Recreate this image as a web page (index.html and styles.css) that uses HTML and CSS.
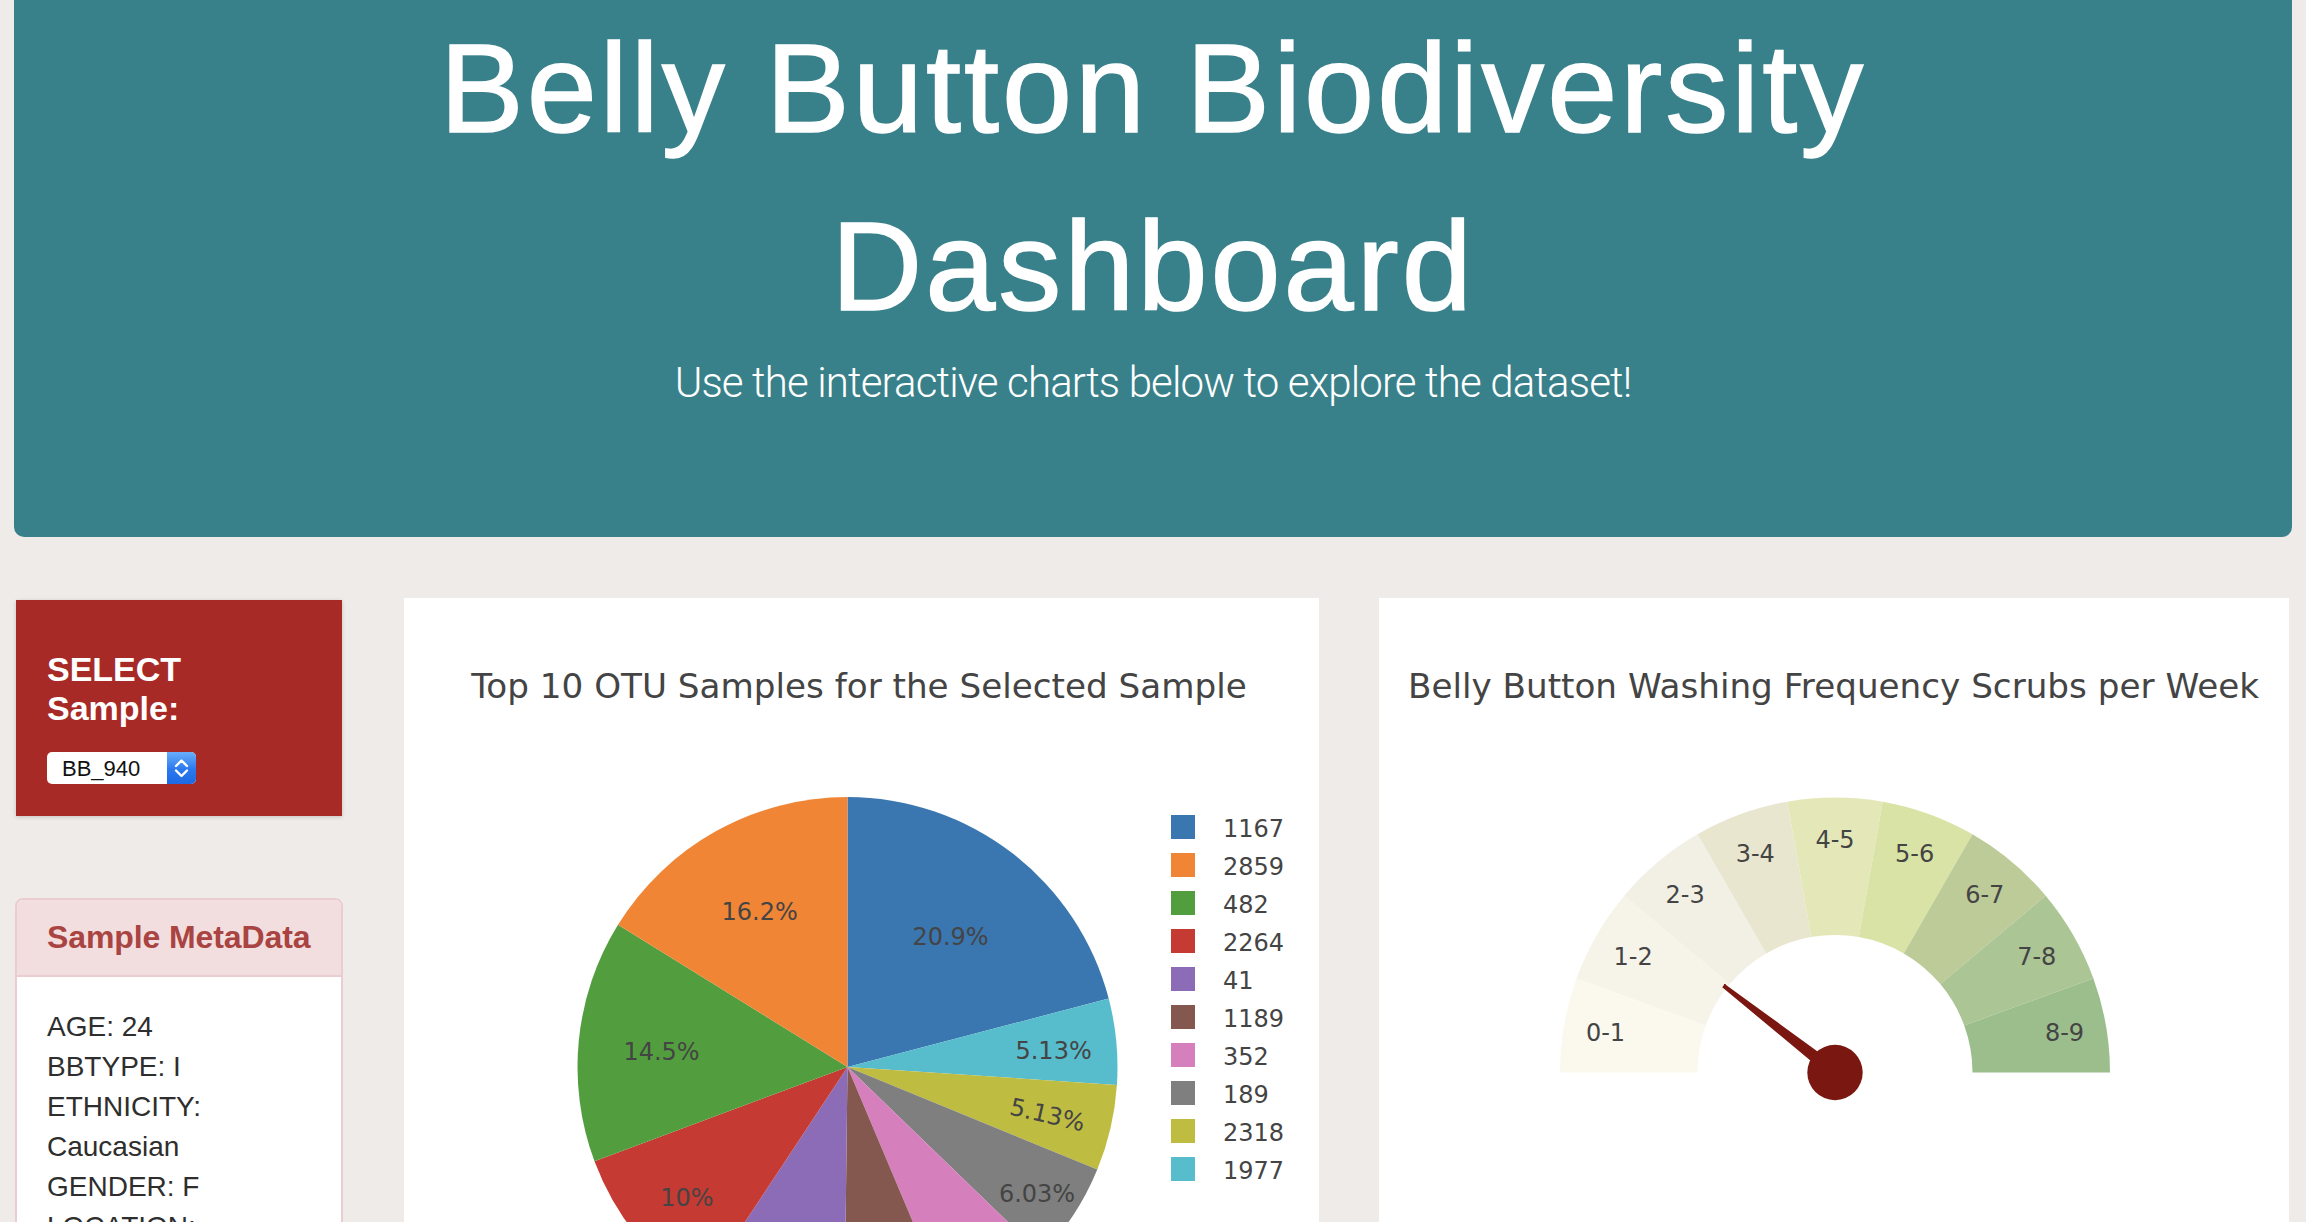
FILE: index.html
```html
<!DOCTYPE html>
<html lang="en">
<head>
<meta charset="utf-8">
<title>Belly Button Biodiversity Dashboard</title>
<link rel="stylesheet" href="styles.css">
</head>
<body>
<header class="hero">
  <h1 class="hero-title">Belly Button Biodiversity Dashboard</h1>
  <p class="hero-sub">Use the interactive charts below to explore the dataset!</p>
</header>

<main class="row">
  <aside class="side">
    <section class="select-card">
      <h4 class="select-title">SELECT Sample:</h4>
      <div class="select-box">
        <span class="select-value">BB_940</span>
        <span class="select-arrow">
          <svg width="29" height="32" viewBox="0 0 29 32">
            <polyline points="9,14 14.5,8.5 20,14" fill="none" stroke="#fff" stroke-width="2.4" stroke-linecap="round" stroke-linejoin="round"/>
            <polyline points="9,18.5 14.5,24 20,18.5" fill="none" stroke="#fff" stroke-width="2.4" stroke-linecap="round" stroke-linejoin="round"/>
          </svg>
        </span>
      </div>
    </section>

    <section class="meta-panel">
      <div class="meta-heading"><h3 class="meta-title">Sample MetaData</h3></div>
      <div class="meta-body">
        <p class="meta-line">AGE: 24</p>
        <p class="meta-line">BBTYPE: I</p>
        <p class="meta-line">ETHNICITY: Caucasian</p>
        <p class="meta-line">GENDER: F</p>
        <p class="meta-line">LOCATION: Beaufort/NC</p>
        <p class="meta-line">SAMPLEID: 940</p>
      </div>
    </section>
  </aside>

  <section class="chart-card chart-pie">
    <svg class="chart-svg" width="915" height="720" viewBox="0 0 915 720">
      <text class="chart-title" x="455" y="100" text-anchor="middle">Top 10 OTU Samples for the Selected Sample</text>
      <g class="slices">
        <path fill="#3a76af" d="M443.5 469 L443.5 199 A270 270 0 0 1 704.7 400.6 Z"/>
        <path fill="#57bccc" d="M443.5 469 L704.7 400.6 A270 270 0 0 1 712.9 486.9 Z"/>
        <path fill="#bfbc42" d="M443.5 469 L712.9 486.9 A270 270 0 0 1 693.3 571.5 Z"/>
        <path fill="#7f7f7f" d="M443.5 469 L693.3 571.5 A270 270 0 0 1 637.7 656.6 Z"/>
        <path fill="#d57fbd" d="M443.5 469 L637.7 656.6 A270 270 0 0 1 548.45 717.8 Z"/>
        <path fill="#84584e" d="M443.5 469 L548.45 717.8 A270 270 0 0 1 440.25 739 Z"/>
        <path fill="#8d6cb7" d="M443.5 469 L440.25 739 A270 270 0 0 1 294.5 694.1 Z"/>
        <path fill="#c53a32" d="M443.5 469 L294.5 694.1 A270 270 0 0 1 190.5 563.3 Z"/>
        <path fill="#529e3e" d="M443.5 469 L190.5 563.3 A270 270 0 0 1 214 326.8 Z"/>
        <path fill="#f08536" d="M443.5 469 L214 326.8 A270 270 0 0 1 443.5 199 Z"/>
      </g>
      <g class="slice-labels" text-anchor="middle">
        <text x="546.5" y="346.9">20.9%</text>
        <text x="355.7" y="321.5">16.2%</text>
        <text x="257.5" y="462.3">14.5%</text>
        <text x="649.6" y="460.7">5.13%</text>
        <text x="643.5" y="525" transform="rotate(13 643.5 516.3)">5.13%</text>
        <text x="283" y="607.7">10%</text>
        <text x="633" y="603.7">6.03%</text>
      </g>
      <g class="legend">
        <rect x="767" y="217" width="24" height="24" fill="#3a76af"/>
        <text x="819" y="239">1167</text>
        <rect x="767" y="255" width="24" height="24" fill="#f08536"/>
        <text x="819" y="277">2859</text>
        <rect x="767" y="293" width="24" height="24" fill="#529e3e"/>
        <text x="819" y="315">482</text>
        <rect x="767" y="331" width="24" height="24" fill="#c53a32"/>
        <text x="819" y="353">2264</text>
        <rect x="767" y="369" width="24" height="24" fill="#8d6cb7"/>
        <text x="819" y="391">41</text>
        <rect x="767" y="407" width="24" height="24" fill="#84584e"/>
        <text x="819" y="429">1189</text>
        <rect x="767" y="445" width="24" height="24" fill="#d57fbd"/>
        <text x="819" y="467">352</text>
        <rect x="767" y="483" width="24" height="24" fill="#7f7f7f"/>
        <text x="819" y="505">189</text>
        <rect x="767" y="521" width="24" height="24" fill="#bfbc42"/>
        <text x="819" y="543">2318</text>
        <rect x="767" y="559" width="24" height="24" fill="#57bccc"/>
        <text x="819" y="581">1977</text>
      </g>
    </svg>
  </section>

  <section class="chart-card chart-gauge">
    <svg class="chart-svg" width="910" height="720" viewBox="0 0 910 720">
      <text class="chart-title" x="454.5" y="100" text-anchor="middle">Belly Button Washing Frequency Scrubs per Week</text>
      <g class="segments">
        <path fill="#fbf9ee" d="M181 474.5 A275 275 0 0 1 197.59 380.44 L326.79 427.47 A137.5 137.5 0 0 0 318.5 474.5 Z"/>
        <path fill="#f6f4e8" d="M197.59 380.44 A275 275 0 0 1 245.34 297.73 L350.67 386.12 A137.5 137.5 0 0 0 326.79 427.47 Z"/>
        <path fill="#f2f0e5" d="M245.34 297.73 A275 275 0 0 1 318.5 236.34 L387.25 355.42 A137.5 137.5 0 0 0 350.67 386.12 Z"/>
        <path fill="#e8e6cf" d="M318.5 236.34 A275 275 0 0 1 408.25 203.68 L432.12 339.09 A137.5 137.5 0 0 0 387.25 355.42 Z"/>
        <path fill="#e4e8b8" d="M408.25 203.68 A275 275 0 0 1 503.75 203.68 L479.88 339.09 A137.5 137.5 0 0 0 432.12 339.09 Z"/>
        <path fill="#d8e3a5" d="M503.75 203.68 A275 275 0 0 1 593.5 236.34 L524.75 355.42 A137.5 137.5 0 0 0 479.88 339.09 Z"/>
        <path fill="#bccb98" d="M593.5 236.34 A275 275 0 0 1 666.66 297.73 L561.33 386.12 A137.5 137.5 0 0 0 524.75 355.42 Z"/>
        <path fill="#abc595" d="M666.66 297.73 A275 275 0 0 1 714.41 380.44 L585.21 427.47 A137.5 137.5 0 0 0 561.33 386.12 Z"/>
        <path fill="#9cbe8d" d="M714.41 380.44 A275 275 0 0 1 731 474.5 L593.5 474.5 A137.5 137.5 0 0 0 585.21 427.47 Z"/>
      </g>
      <g class="slice-labels" text-anchor="middle">
        <text x="226.5" y="442.7">0-1</text>
        <text x="254.2" y="366.7">1-2</text>
        <text x="306.2" y="304.7">2-3</text>
        <text x="376.3" y="264.2">3-4</text>
        <text x="456" y="250.2">4-5</text>
        <text x="535.7" y="264.2">5-6</text>
        <text x="605.8" y="304.7">6-7</text>
        <text x="657.8" y="366.7">7-8</text>
        <text x="685.5" y="442.7">8-9</text>
      </g>
      <polygon class="needle" points="456,468.5 456,480.5 344.5,387.6"/>
      <circle class="needle-hub" cx="456" cy="474.5" r="27.7"/>
    </svg>
  </section>
</main>
</body>
</html>
```

FILE: styles.css
```css
html, body {
  margin: 0;
  padding: 0;
}

body {
  background: #efebe8;
  font-family: "Liberation Sans", Arial, Helvetica, sans-serif;
  color: #333;
  overflow: hidden;
}

/* ---------- hero ---------- */
.hero {
  margin: 0 14px;
  height: 537px;
  box-sizing: border-box;
  background: #39818a;
  border-radius: 0 0 10px 10px;
  color: #fff;
  text-align: center;
}

.hero-title {
  margin: 0 auto;
  max-width: 1600px;
  font-size: 126px;
  line-height: 178px;
  font-weight: 400;
  letter-spacing: 3px;
  -webkit-text-stroke: 1.5px #fff;
}

.hero-sub {
  margin: -3px 0 0;
  font-family: Roboto, "Liberation Sans", sans-serif;
  font-weight: 300;
  font-size: 42px;
  line-height: 60px;
  letter-spacing: -0.85px;
}

/* ---------- row ---------- */
.row {
  display: flex;
  align-items: flex-start;
  padding-left: 15px;
  margin-top: 61px;
}

.side {
  width: 328px;
  flex: none;
  display: flex;
  flex-direction: column;
}

.select-card {
  margin: 2px 0 0 1px;
  width: 326px;
  height: 216px;
  box-sizing: border-box;
  padding: 50px 31px 0;
  background: #a82a27;
  box-shadow: 0 1px 4px rgba(0, 0, 0, 0.18);
}

.select-title {
  margin: 0;
  color: #fff;
  font-size: 34px;
  line-height: 38.5px;
  font-weight: 700;
}

.select-box {
  margin-top: 25px;
  width: 149px;
  height: 32px;
  display: flex;
  background: #fff;
  border-radius: 5px;
  overflow: hidden;
}

.select-value {
  flex: 1;
  padding-left: 15px;
  font-size: 22px;
  line-height: 33px;
  color: #111;
}

.select-arrow {
  width: 29px;
  height: 32px;
  background: linear-gradient(#6aaefb, #2a78ee 55%, #1c69e3);
  display: flex;
}

.meta-panel {
  margin-top: 82px;
  background: #fff;
  border: 2px solid #ebccd1;
  border-radius: 8px;
}

.meta-heading {
  background: #f2dede;
  border-bottom: 2px solid #ebccd1;
  border-radius: 6px 6px 0 0;
  padding: 20px 30px;
}

.meta-title {
  margin: 0;
  color: #a94442;
  font-size: 32px;
  line-height: 35.2px;
  font-weight: 700;
  white-space: nowrap;
  letter-spacing: -0.1px;
}

.meta-body {
  padding: 30px;
  font-size: 28px;
  line-height: 40px;
  color: #2e2e2e;
}

.meta-line {
  margin: 0;
}

/* ---------- charts ---------- */
.chart-card {
  flex: none;
  background: #fff;
  height: 720px;
}

.chart-pie {
  width: 915px;
  margin-left: 61px;
}

.chart-gauge {
  width: 910px;
  margin-left: 60px;
}

.chart-svg {
  display: block;
}

.chart-title {
  font-family: "DejaVu Sans", Verdana, sans-serif;
  font-size: 34.2px;
  fill: #444;
}

.slice-labels text,
.legend text {
  font-family: "DejaVu Sans", Verdana, sans-serif;
  font-size: 24px;
  fill: #444;
}

.needle {
  fill: #7a1710;
  stroke: #7a1710;
  stroke-width: 4;
  stroke-linejoin: bevel;
}

.needle-hub {
  fill: #7a1710;
}
```
